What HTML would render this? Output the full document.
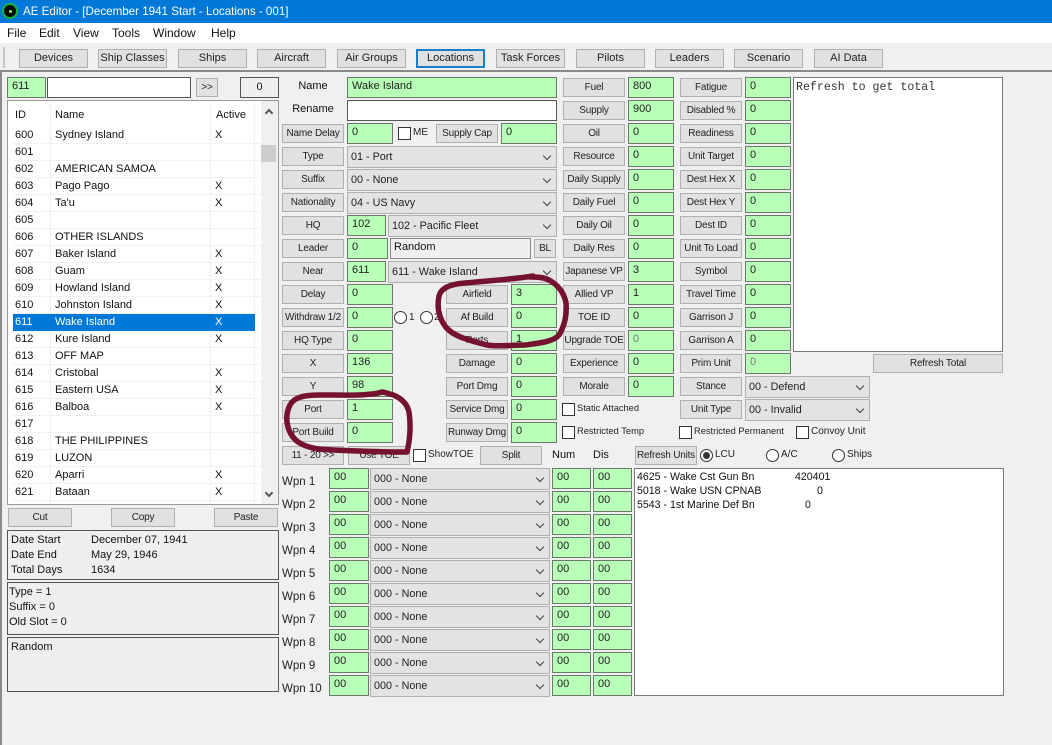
<!DOCTYPE html>
<html><head><meta charset="utf-8"><style>
html,body{margin:0;padding:0}
#r{position:relative;width:1052px;height:745px;overflow:hidden;background:#f0f0f0;font:11px "Liberation Sans",sans-serif;color:#111}
#r div,#r svg{position:absolute;box-sizing:border-box;white-space:pre}
.b{width:62px;height:19px;background:#e1e1e1;border:1px solid #b0b0b0;font-size:10px;letter-spacing:-.2px;line-height:17px;text-align:center;color:#222}
.t{width:69px;height:19px;top:49px;background:#e1e1e1;border:1px solid #b0b0b0;line-height:17px;text-align:center;color:#222}
.f{height:21px;background:#b8ffb8;border:1px solid #6a7a6a;line-height:17px;padding-left:4px;font-size:11px;color:#222}
.s{height:22px;background:#e3e3e3;border:1px solid #b0b0b0;line-height:21px;padding-left:3px;font-size:10.8px;color:#222}
.s::after{content:"";position:absolute;right:6px;top:6px;width:5px;height:5px;border-right:1px solid #444;border-bottom:1px solid #444;transform:rotate(45deg)}
.c{width:13px;height:13px;background:#fff;border:1px solid #333}
.o{width:13px;height:13px;background:#fff;border:1px solid #333;border-radius:50%}
.l{font-size:10px;color:#222;margin-top:1px}
.rt{font-size:9.3px}
.m{margin-top:1px}
.bx{left:7px;width:272px;border:1px solid #555;background:#efefef;font-size:11px;color:#222}
.w1{left:282px;font-size:11.5px;color:#222;margin-top:2px}
.a0{left:347px;width:46px}.a1{left:511px;width:46px}.a2{left:628px;width:46px}.a3{left:745px;width:46px}
.p0{left:282px}.p1{left:446px}.p2{left:563px}.p3{left:680px}
.row{left:13px;width:248px;height:17px;border-bottom:1px solid #f0f0f0;line-height:17px}
.id{left:2px}.nm{left:42px}.ac{left:202px}
</style></head><body><div id="r">

<div style="left:0;top:0;width:1052px;height:23px;background:#0078d7"></div>
<div style="left:2px;top:3px;width:16px;height:16px;border-radius:50%;background:#050505;border:2px solid #15b83a"></div>
<div style="left:9px;top:10px;width:3px;height:3px;border-radius:50%;background:#7dff5a"></div>
<div style="left:23px;top:4px;color:#fff;font-size:11.6px;line-height:15px">AE Editor - [December 1941 Start - Locations - 001]</div>
<div style="left:0;top:23px;width:1052px;height:20px;background:#fff"></div>
<div style="left:7px;top:26px;font-size:12px;line-height:14px">File</div>
<div style="left:39px;top:26px;font-size:12px;line-height:14px">Edit</div>
<div style="left:73px;top:26px;font-size:12px;line-height:14px">View</div>
<div style="left:112px;top:26px;font-size:12px;line-height:14px">Tools</div>
<div style="left:153px;top:26px;font-size:12px;line-height:14px">Window</div>
<div style="left:211px;top:26px;font-size:12px;line-height:14px">Help</div>
<div style="left:3px;top:47px;width:2px;height:21px;background:#c8c8c8"></div>
<div style="left:0;top:70px;width:1052px;height:2px;background:#8a8a8a"></div>
<div style="left:0;top:70px;width:2px;height:675px;background:#8a8a8a"></div>

<div class="t" style="left:19px">Devices</div>
<div class="t" style="left:98px">Ship Classes</div>
<div class="t" style="left:178px">Ships</div>
<div class="t" style="left:257px">Aircraft</div>
<div class="t" style="left:337px">Air Groups</div>
<div class="t" style="left:416px;border:2px solid #1a7fc8;line-height:15px">Locations</div>
<div class="t" style="left:496px">Task Forces</div>
<div class="t" style="left:576px">Pilots</div>
<div class="t" style="left:655px">Leaders</div>
<div class="t" style="left:734px">Scenario</div>
<div class="t" style="left:814px">AI Data</div>

<div class="f" style="left:7px;top:77px;width:39px">611</div>
<div style="left:47px;top:77px;width:144px;height:21px;background:#fff;border:1px solid #555"></div>
<div class="b" style="left:196px;top:78px;width:22px">&gt;&gt;</div>
<div style="left:240px;top:77px;width:39px;height:21px;border:1px solid #555;background:#efefef;text-align:center;line-height:19px">0</div>

<div style="left:7px;top:100px;width:272px;height:405px;background:#fff;border:1px solid #9a9a9a"></div>
<div style="left:15px;top:108px;line-height:14px">ID</div>
<div style="left:55px;top:108px;line-height:14px">Name</div>
<div style="left:216px;top:108px;line-height:14px">Active</div>
<div style="left:50px;top:101px;width:1px;height:403px;background:#efefef"></div>
<div style="left:210px;top:101px;width:1px;height:403px;background:#efefef"></div>
<div style="left:254px;top:101px;width:1px;height:403px;background:#efefef"></div>
<div style="left:261px;top:101px;width:17px;height:403px;background:#f0f0f0"></div>
<div style="left:261px;top:145px;width:15px;height:17px;background:#cdcdcd"></div>
<div style="left:266px;top:110px;width:6px;height:6px;border-left:2px solid #555;border-top:2px solid #555;transform:rotate(45deg)"></div>
<div style="left:266px;top:490px;width:6px;height:6px;border-right:2px solid #555;border-bottom:2px solid #555;transform:rotate(45deg)"></div>

<div class="row" style="top:127px"><div class="id">600</div><div class="nm">Sydney Island</div><div class="ac">X</div></div>
<div class="row" style="top:144px"><div class="id">601</div></div>
<div class="row" style="top:161px"><div class="id">602</div><div class="nm">AMERICAN SAMOA</div></div>
<div class="row" style="top:178px"><div class="id">603</div><div class="nm">Pago Pago</div><div class="ac">X</div></div>
<div class="row" style="top:195px"><div class="id">604</div><div class="nm">Ta'u</div><div class="ac">X</div></div>
<div class="row" style="top:212px"><div class="id">605</div></div>
<div class="row" style="top:229px"><div class="id">606</div><div class="nm">OTHER ISLANDS</div></div>
<div class="row" style="top:246px"><div class="id">607</div><div class="nm">Baker Island</div><div class="ac">X</div></div>
<div class="row" style="top:263px"><div class="id">608</div><div class="nm">Guam</div><div class="ac">X</div></div>
<div class="row" style="top:280px"><div class="id">609</div><div class="nm">Howland Island</div><div class="ac">X</div></div>
<div class="row" style="top:297px"><div class="id">610</div><div class="nm">Johnston Island</div><div class="ac">X</div></div>
<div class="row" style="top:314px;width:242px;background:#0078d7;color:#fff;border:0"><div class="id">611</div><div class="nm">Wake Island</div><div class="ac">X</div></div>
<div class="row" style="top:331px"><div class="id">612</div><div class="nm">Kure Island</div><div class="ac">X</div></div>
<div class="row" style="top:348px"><div class="id">613</div><div class="nm">OFF MAP</div></div>
<div class="row" style="top:365px"><div class="id">614</div><div class="nm">Cristobal</div><div class="ac">X</div></div>
<div class="row" style="top:382px"><div class="id">615</div><div class="nm">Eastern USA</div><div class="ac">X</div></div>
<div class="row" style="top:399px"><div class="id">616</div><div class="nm">Balboa</div><div class="ac">X</div></div>
<div class="row" style="top:416px"><div class="id">617</div></div>
<div class="row" style="top:433px"><div class="id">618</div><div class="nm">THE PHILIPPINES</div></div>
<div class="row" style="top:450px"><div class="id">619</div><div class="nm">LUZON</div></div>
<div class="row" style="top:467px"><div class="id">620</div><div class="nm">Aparri</div><div class="ac">X</div></div>
<div class="row" style="top:484px"><div class="id">621</div><div class="nm">Bataan</div><div class="ac">X</div></div>

<div class="b" style="left:8px;top:508px;width:64px">Cut</div>
<div class="b" style="left:111px;top:508px;width:64px">Copy</div>
<div class="b" style="left:214px;top:508px;width:64px">Paste</div>

<div class="bx" style="top:530px;height:50px"></div>
<div class="m" style="left:11px;top:532px;line-height:15px">Date Start</div><div class="m" style="left:91px;top:532px;line-height:15px">December 07, 1941</div>
<div class="m" style="left:11px;top:547px;line-height:15px">Date End</div><div class="m" style="left:91px;top:547px;line-height:15px">May 29, 1946</div>
<div class="m" style="left:11px;top:562px;line-height:15px">Total Days</div><div class="m" style="left:91px;top:562px;line-height:15px">1634</div>
<div class="bx" style="top:582px;height:53px"></div>
<div class="m" style="left:9px;top:584px;line-height:15px">Type = 1</div>
<div class="m" style="left:9px;top:599px;line-height:15px">Suffix = 0</div>
<div class="m" style="left:9px;top:614px;line-height:15px">Old Slot = 0</div>
<div class="bx" style="top:637px;height:55px"></div>
<div class="m" style="left:11px;top:639px;line-height:15px">Random</div>

<div style="left:282px;top:79px;width:62px;text-align:center;line-height:14px">Name</div>
<div style="left:282px;top:102px;width:62px;text-align:center;line-height:14px">Rename</div>
<div class="f" style="left:347px;top:77px;width:210px">Wake Island</div>
<div style="left:347px;top:100px;width:210px;height:21px;background:#fff;border:1px solid #555"></div>

<div class="b p0" style="top:124px">Name Delay</div>
<div class="f a0" style="top:123px">0</div>
<div class="c" style="left:398px;top:127px"></div><div class="l" style="left:413px;top:126px">ME</div>
<div class="b" style="left:436px;top:124px">Supply Cap</div>
<div class="f" style="left:501px;top:123px;width:56px">0</div>

<div class="b p0" style="top:147px">Type</div><div class="s" style="left:347px;top:146px;width:210px">01 - Port</div>
<div class="b p0" style="top:170px">Suffix</div><div class="s" style="left:347px;top:169px;width:210px">00 - None</div>
<div class="b p0" style="top:193px">Nationality</div><div class="s" style="left:347px;top:192px;width:210px">04 - US Navy</div>
<div class="b p0" style="top:216px">HQ</div><div class="f" style="left:347px;top:215px;width:39px">102</div><div class="s" style="left:388px;top:215px;width:169px">102 - Pacific Fleet</div>
<div class="b p0" style="top:239px">Leader</div><div class="f" style="left:347px;top:238px;width:41px">0</div>
<div style="left:390px;top:238px;width:141px;height:21px;background:#efefef;border:1px solid #888;padding-left:3px;line-height:17px">Random</div>
<div class="b" style="left:534px;top:239px;width:22px">BL</div>
<div class="b p0" style="top:262px">Near</div><div class="f" style="left:347px;top:261px;width:39px">611</div><div class="s" style="left:388px;top:261px;width:169px">611 - Wake Island</div>

<div class="b p0" style="top:285px">Delay</div><div class="f a0" style="top:284px">0</div>
<div class="b p0" style="top:308px">Withdraw 1/2</div><div class="f a0" style="top:307px">0</div>
<div class="o" style="left:394px;top:311px"></div><div class="l" style="left:409px;top:311px">1</div>
<div class="o" style="left:420px;top:311px"></div><div class="l" style="left:434px;top:311px">2</div>
<div class="b p0" style="top:331px">HQ Type</div><div class="f a0" style="top:330px">0</div>
<div class="b p0" style="top:354px">X</div><div class="f a0" style="top:353px">136</div>
<div class="b p0" style="top:377px">Y</div><div class="f a0" style="top:376px">98</div>
<div class="b p0" style="top:400px">Port</div><div class="f a0" style="top:399px">1</div>
<div class="b p0" style="top:423px">Port Build</div><div class="f a0" style="top:422px">0</div>

<div class="b p1" style="top:285px">Airfield</div><div class="f a1" style="top:284px">3</div>
<div class="b p1" style="top:308px">Af Build</div><div class="f a1" style="top:307px">0</div>
<div class="b p1" style="top:331px">Ports</div><div class="f a1" style="top:330px">1</div>
<div class="b p1" style="top:354px">Damage</div><div class="f a1" style="top:353px">0</div>
<div class="b p1" style="top:377px">Port Dmg</div><div class="f a1" style="top:376px">0</div>
<div class="b p1" style="top:400px">Service Dmg</div><div class="f a1" style="top:399px">0</div>
<div class="b p1" style="top:423px">Runway Dmg</div><div class="f a1" style="top:422px">0</div>

<div class="b p0" style="top:446px">11 - 20 &gt;&gt;</div>
<div class="b" style="left:348px;top:446px">Use TOE</div>
<div class="c" style="left:413px;top:449px"></div><div class="l" style="left:428px;top:448px">ShowTOE</div>
<div class="b" style="left:480px;top:446px">Split</div>
<div class="m" style="left:552px;top:448px">Num</div><div class="m" style="left:593px;top:448px">Dis</div>

<div class="b p2" style="top:78px">Fuel</div><div class="f a2" style="top:77px">800</div>
<div class="b p2" style="top:101px">Supply</div><div class="f a2" style="top:100px">900</div>
<div class="b p2" style="top:124px">Oil</div><div class="f a2" style="top:123px">0</div>
<div class="b p2" style="top:147px">Resource</div><div class="f a2" style="top:146px">0</div>
<div class="b p2" style="top:170px">Daily Supply</div><div class="f a2" style="top:169px">0</div>
<div class="b p2" style="top:193px">Daily Fuel</div><div class="f a2" style="top:192px">0</div>
<div class="b p2" style="top:216px">Daily Oil</div><div class="f a2" style="top:215px">0</div>
<div class="b p2" style="top:239px">Daily Res</div><div class="f a2" style="top:238px">0</div>
<div class="b p2" style="top:262px">Japanese VP</div><div class="f a2" style="top:261px">3</div>
<div class="b p2" style="top:285px">Allied VP</div><div class="f a2" style="top:284px">1</div>
<div class="b p2" style="top:308px">TOE ID</div><div class="f a2" style="top:307px">0</div>
<div class="b p2" style="top:331px">Upgrade TOE</div><div class="f a2" style="top:330px;color:#777">0</div>
<div class="b p2" style="top:354px">Experience</div><div class="f a2" style="top:353px">0</div>
<div class="b p2" style="top:377px">Morale</div><div class="f a2" style="top:376px">0</div>
<div class="c" style="left:562px;top:403px"></div><div class="l rt" style="left:577px;top:402px">Static Attached</div>
<div class="c" style="left:562px;top:426px"></div><div class="l rt" style="left:577px;top:425px">Restricted Temp</div>

<div class="b p3" style="top:78px">Fatigue</div><div class="f a3" style="top:77px">0</div>
<div class="b p3" style="top:101px">Disabled %</div><div class="f a3" style="top:100px">0</div>
<div class="b p3" style="top:124px">Readiness</div><div class="f a3" style="top:123px">0</div>
<div class="b p3" style="top:147px">Unit Target</div><div class="f a3" style="top:146px">0</div>
<div class="b p3" style="top:170px">Dest Hex X</div><div class="f a3" style="top:169px">0</div>
<div class="b p3" style="top:193px">Dest Hex Y</div><div class="f a3" style="top:192px">0</div>
<div class="b p3" style="top:216px">Dest ID</div><div class="f a3" style="top:215px">0</div>
<div class="b p3" style="top:239px">Unit To Load</div><div class="f a3" style="top:238px">0</div>
<div class="b p3" style="top:262px">Symbol</div><div class="f a3" style="top:261px">0</div>
<div class="b p3" style="top:285px">Travel Time</div><div class="f a3" style="top:284px">0</div>
<div class="b p3" style="top:308px">Garrison J</div><div class="f a3" style="top:307px">0</div>
<div class="b p3" style="top:331px">Garrison A</div><div class="f a3" style="top:330px">0</div>
<div class="b p3" style="top:354px">Prim Unit</div><div class="f a3" style="top:353px;color:#777">0</div>
<div class="b p3" style="top:377px">Stance</div><div class="s" style="left:745px;top:376px;width:125px">00 - Defend</div>
<div class="b p3" style="top:400px">Unit Type</div><div class="s" style="left:745px;top:399px;width:125px">00 - Invalid</div>
<div class="c" style="left:679px;top:426px"></div><div class="l rt" style="left:694px;top:425px">Restricted Permanent</div>
<div class="c" style="left:796px;top:426px"></div><div class="l" style="left:811px;top:425px">Convoy Unit</div>

<div style="left:793px;top:77px;width:210px;height:275px;background:#fff;border:1px solid #777;padding:3px 2px;color:#333;font:11.6px/13px 'Liberation Mono',monospace">Refresh to get total</div>
<div class="b" style="left:873px;top:354px;width:130px">Refresh Total</div>

<div class="b" style="left:635px;top:446px">Refresh Units</div>
<div class="o" style="left:700px;top:449px"></div><div style="left:703px;top:452px;width:7px;height:7px;border-radius:50%;background:#333"></div>
<div class="l" style="left:715px;top:448px">LCU</div>
<div class="o" style="left:766px;top:449px"></div><div class="l" style="left:781px;top:448px">A/C</div>
<div class="o" style="left:832px;top:449px"></div><div class="l" style="left:847px;top:448px">Ships</div>

<div style="left:634px;top:468px;width:370px;height:228px;background:#fff;border:1px solid #777"></div>
<div class="m" style="left:637px;top:469px;font-size:10.6px;line-height:14px">4625 - Wake Cst Gun Bn</div><div class="m" style="left:795px;top:469px;font-size:10.6px;line-height:14px">420401</div>
<div class="m" style="left:637px;top:483px;font-size:10.6px;line-height:14px">5018 - Wake USN CPNAB</div><div class="m" style="left:817px;top:483px;font-size:10.6px;line-height:14px">0</div>
<div class="m" style="left:637px;top:497px;font-size:10.6px;line-height:14px">5543 - 1st Marine Def Bn</div><div class="m" style="left:805px;top:497px;font-size:10.6px;line-height:14px">0</div>

<div class="w1" style="top:474px">Wpn 1</div><div class="f" style="left:329px;top:468px;width:40px">00</div><div class="s" style="left:370px;top:468px;width:180px">000 - None</div><div class="f" style="left:552px;top:468px;width:39px">00</div><div class="f" style="left:593px;top:468px;width:39px">00</div>
<div class="w1" style="top:497px">Wpn 2</div><div class="f" style="left:329px;top:491px;width:40px">00</div><div class="s" style="left:370px;top:491px;width:180px">000 - None</div><div class="f" style="left:552px;top:491px;width:39px">00</div><div class="f" style="left:593px;top:491px;width:39px">00</div>
<div class="w1" style="top:520px">Wpn 3</div><div class="f" style="left:329px;top:514px;width:40px">00</div><div class="s" style="left:370px;top:514px;width:180px">000 - None</div><div class="f" style="left:552px;top:514px;width:39px">00</div><div class="f" style="left:593px;top:514px;width:39px">00</div>
<div class="w1" style="top:543px">Wpn 4</div><div class="f" style="left:329px;top:537px;width:40px">00</div><div class="s" style="left:370px;top:537px;width:180px">000 - None</div><div class="f" style="left:552px;top:537px;width:39px">00</div><div class="f" style="left:593px;top:537px;width:39px">00</div>
<div class="w1" style="top:566px">Wpn 5</div><div class="f" style="left:329px;top:560px;width:40px">00</div><div class="s" style="left:370px;top:560px;width:180px">000 - None</div><div class="f" style="left:552px;top:560px;width:39px">00</div><div class="f" style="left:593px;top:560px;width:39px">00</div>
<div class="w1" style="top:589px">Wpn 6</div><div class="f" style="left:329px;top:583px;width:40px">00</div><div class="s" style="left:370px;top:583px;width:180px">000 - None</div><div class="f" style="left:552px;top:583px;width:39px">00</div><div class="f" style="left:593px;top:583px;width:39px">00</div>
<div class="w1" style="top:612px">Wpn 7</div><div class="f" style="left:329px;top:606px;width:40px">00</div><div class="s" style="left:370px;top:606px;width:180px">000 - None</div><div class="f" style="left:552px;top:606px;width:39px">00</div><div class="f" style="left:593px;top:606px;width:39px">00</div>
<div class="w1" style="top:635px">Wpn 8</div><div class="f" style="left:329px;top:629px;width:40px">00</div><div class="s" style="left:370px;top:629px;width:180px">000 - None</div><div class="f" style="left:552px;top:629px;width:39px">00</div><div class="f" style="left:593px;top:629px;width:39px">00</div>
<div class="w1" style="top:658px">Wpn 9</div><div class="f" style="left:329px;top:652px;width:40px">00</div><div class="s" style="left:370px;top:652px;width:180px">000 - None</div><div class="f" style="left:552px;top:652px;width:39px">00</div><div class="f" style="left:593px;top:652px;width:39px">00</div>
<div class="w1" style="top:681px">Wpn 10</div><div class="f" style="left:329px;top:675px;width:40px">00</div><div class="s" style="left:370px;top:675px;width:180px">000 - None</div><div class="f" style="left:552px;top:675px;width:39px">00</div><div class="f" style="left:593px;top:675px;width:39px">00</div>

<svg style="left:0;top:0" width="1052" height="745" viewBox="0 0 1052 745" fill="none" stroke="#741230" stroke-width="5.5" stroke-linecap="round" stroke-linejoin="round">
<path d="M533 276C515 279 490 281 465 283C450 284 441 288 439 296C437 306 438 316 445 326C452 336 468 340 487 345C500 347 510 345 525 345C540 343 553 342 559 335C565 325 567 315 566 303C564 292 558 285 549 280C543 277 537 277 530 277"/>
<path d="M382 392C370 396 345 395 320 395C305 395 294 397 290 405C286 413 286 422 289 430C293 440 300 446 318 449C345 451 385 452 407 452C410 440 411 425 409 412C407 402 398 396 390 394C386 393 384 392 382 392"/>
</svg>
</div></body></html>
